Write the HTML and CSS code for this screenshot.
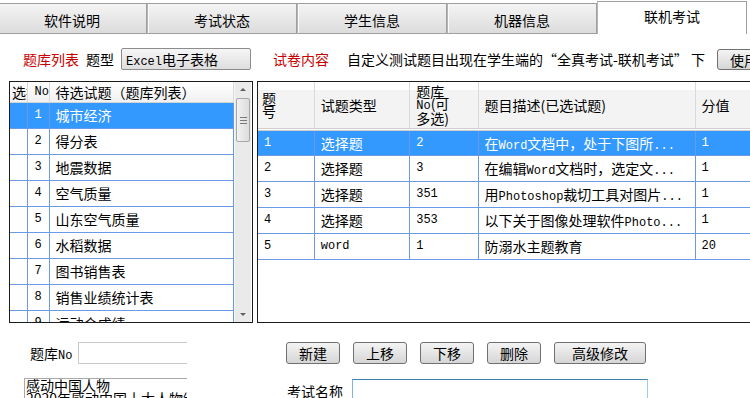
FILE: index.html
```html
<!DOCTYPE html>
<html lang="zh-CN">
<head>
    <meta charset="UTF-8">
    <title>联机考试</title>
    <link rel="stylesheet" href="styles.css">
</head>
<body>
    <div class="tabs">
        <div class="tab">软件说明</div>
        <div class="tab">考试状态</div>
        <div class="tab">学生信息</div>
        <div class="tab">机器信息</div>
        <div class="tab active">联机考试</div>
    </div>

    <div class="toolbar">
        <span class="red">题库列表</span>
        <span class="type-label">题型</span>
        <div class="select"><span class="m">Excel</span>电子表格</div>
        <span class="red paper-label">试卷内容</span>
        <span class="hint">自定义测试题目出现在学生端的“全真考试-联机考试” 下</span>
        <button class="btn use-btn">使用试卷</button>
    </div>

    <div class="panels">
        <div class="panel bank">
            <div class="bank-grid">
                <table class="grid">
                    <colgroup><col style="width:17px"><col style="width:22px"><col></colgroup>
                    <thead>
                        <tr><th class="clip">选择</th><th class="m">No</th><th>待选试题（题库列表）</th></tr>
                    </thead>
                    <tbody>
                        <tr class="sel"><td></td><td class="m num">1</td><td>城市经济</td></tr>
                        <tr><td></td><td class="m num">2</td><td>得分表</td></tr>
                        <tr><td></td><td class="m num">3</td><td>地震数据</td></tr>
                        <tr><td></td><td class="m num">4</td><td>空气质量</td></tr>
                        <tr><td></td><td class="m num">5</td><td>山东空气质量</td></tr>
                        <tr><td></td><td class="m num">6</td><td>水稻数据</td></tr>
                        <tr><td></td><td class="m num">7</td><td>图书销售表</td></tr>
                        <tr><td></td><td class="m num">8</td><td>销售业绩统计表</td></tr>
                        <tr><td></td><td class="m num">9</td><td>运动会成绩</td></tr>
                    </tbody>
                </table>
            </div>
            <div class="scrollbar">
                <div class="arrow up"></div>
                <div class="thumb"><span></span><span></span><span></span></div>
                <div class="track"></div>
                <div class="arrow down"></div>
            </div>
        </div>

        <div class="panel paper">
            <table class="grid paper-grid">
                <colgroup>
                    <col style="width:56px"><col style="width:95px"><col style="width:68px">
                    <col style="width:216px"><col style="width:80px">
                </colgroup>
                <thead>
                    <tr>
                        <th class="stack">题<br>号</th>
                        <th>试题类型</th>
                        <th class="stack">题库<br><span class="m">No</span>(可<br>多选)</th>
                        <th>题目描述(已选试题)</th>
                        <th>分值</th>
                    </tr>
                </thead>
                <tbody>
                    <tr class="sel"><td class="m">1</td><td>选择题</td><td class="m">2</td><td>在<span class="m">Word</span>文档中，处于下图所<span class="m">...</span></td><td class="m">1</td></tr>
                    <tr><td class="m">2</td><td>选择题</td><td class="m">3</td><td>在编辑<span class="m">Word</span>文档时，选定文<span class="m">...</span></td><td class="m">1</td></tr>
                    <tr><td class="m">3</td><td>选择题</td><td class="m">351</td><td>用<span class="m">Photoshop</span>裁切工具对图片<span class="m">...</span></td><td class="m">1</td></tr>
                    <tr><td class="m">4</td><td>选择题</td><td class="m">353</td><td>以下关于图像处理软件<span class="m">Photo...</span></td><td class="m">1</td></tr>
                    <tr><td class="m">5</td><td class="m">word</td><td class="m">1</td><td>防溺水主题教育</td><td class="m">20</td></tr>
                </tbody>
            </table>
        </div>
    </div>

    <div class="bottom">
        <div class="bank-no">
            <span>题库<span class="m">No</span></span>
            <div class="field"></div>
        </div>
        <div class="actions">
            <button class="btn">新建</button>
            <button class="btn">上移</button>
            <button class="btn">下移</button>
            <button class="btn">删除</button>
            <button class="btn wide">高级修改</button>
        </div>
        <div class="memo">感动中国人物<br>2020年感动中国十大人物颁奖词</div>
        <div class="exam-name">
            <span>考试名称</span>
            <div class="field name-field"></div>
        </div>
    </div>
</body>
</html>
```

FILE: styles.css
```css
* {
    margin: 0;
    padding: 0;
    box-sizing: border-box;
}

body {
    width: 750px;
    height: 398px;
    overflow: hidden;
    background: #fff;
    color: #000;
    font-family: "Noto Sans CJK SC", sans-serif;
    font-size: 14px;
}

.m {
    font-family: "Liberation Mono", monospace;
    font-size: 12px;
}

/* tabs */
.tabs {
    display: flex;
    align-items: flex-end;
    height: 34px;
    margin-left: -3px;
    width: 760px;
}

.tab {
    width: 150px;
    height: 31px;
    display: flex;
    align-items: center;
    justify-content: center;
    padding-top: 3px;
    border: 1px solid #9f9f9f;
    border-left-color: #b4b4b4;
    background: linear-gradient(#f4f4f4, #dcdcdc);
    box-shadow: inset 1px 0 #fbfbfb;
}

.tab.active {
    height: 33px;
    padding-top: 0;
    padding-bottom: 5px;
    background: #fff;
    border-bottom: none;
    box-shadow: none;
}

/* toolbar */
.toolbar {
    display: flex;
    align-items: center;
    height: 22px;
    margin-top: 14px;
    padding-left: 23px;
    white-space: nowrap;
}

.toolbar > * {
    flex-shrink: 0;
}

.red {
    color: #c80000;
}

.type-label {
    margin-left: 7px;
}

.select {
    width: 130px;
    height: 22px;
    margin-left: 7px;
    padding-left: 4px;
    line-height: 20px;
    border: 1px solid #8c8c8c;
    border-radius: 2px;
    background: linear-gradient(#f6f6f6, #dedede);
}

.paper-label {
    margin-left: 22px;
}

.hint {
    margin-left: 18px;
}

.btn {
    height: 22px;
    font-family: "Noto Sans CJK SC", sans-serif;
    font-size: 14px;
    color: #000;
    border: 1px solid #707070;
    border-radius: 3px;
    background: linear-gradient(#f4f4f4, #d6d6d6);
}

.use-btn {
    width: 70px;
    height: 21px;
    margin-left: 12px;
    padding-left: 12px;
    text-align: left;
}

/* panels */
.panels {
    display: flex;
    gap: 4px;
    height: 242px;
    margin-top: 11px;
    padding-left: 9px;
}

.panel {
    border: 1px solid #1c1c1c;
    background: #fff;
    overflow: hidden;
}

.bank {
    width: 244px;
    display: flex;
    flex-shrink: 0;
}

.bank-grid {
    width: 224px;
    overflow: hidden;
}

.paper {
    width: 520px;
    flex-shrink: 0;
}

.grid {
    border-collapse: collapse;
    table-layout: fixed;
    width: 100%;
}

.grid th {
    height: 20px;
    padding-left: 6px;
    line-height: 18px;
    font-weight: normal;
    text-align: left;
    white-space: nowrap;
    overflow: hidden;
    background: linear-gradient(#fff, #f0f0f0);
    border-right: 1px solid #dadada;
    border-bottom: 1px solid #d4d4d4;
}

.grid th.clip {
    padding-left: 2px;
}

.grid th.m {
    padding-left: 7px;
}

.grid td {
    height: 26px;
    padding-left: 6px;
    white-space: nowrap;
    overflow: hidden;
    border-right: 1px solid #6a9ae6;
    border-bottom: 1px solid #6a9ae6;
}

.grid td.num {
    padding-left: 0;
    text-align: center;
}

.grid tr.sel td {
    background: #3399ff;
    color: #fff;
}

.paper-grid th {
    height: 47px;
    border-bottom: 3px double #cfcfcf;
    background: linear-gradient(#fff 18%, #f3f3f3 18%);
}

.paper-grid th.stack {
    line-height: 12px;
}

.paper-grid th.stack:first-child {
    line-height: 13px;
    padding-left: 4px;
}

/* scrollbar */
.scrollbar {
    width: 17px;
    display: flex;
    flex-direction: column;
    background: #eaeaea;
    border-left: 1px solid #f4f4f4;
}

.arrow {
    height: 16px;
    position: relative;
}

.arrow::after {
    content: "";
    position: absolute;
    left: 5px;
    border-left: 3px solid transparent;
    border-right: 3px solid transparent;
}

.arrow.up::after {
    top: 6px;
    border-bottom: 3px solid #606060;
}

.arrow.down::after {
    top: 7px;
    border-top: 3px solid #606060;
}

.thumb {
    height: 44px;
    margin: 0 1px;
    border: 1px solid #a8a8a8;
    border-radius: 2px;
    background: linear-gradient(90deg, #f2f2f2, #dcdcdc);
    display: flex;
    flex-direction: column;
    justify-content: center;
    align-items: center;
    gap: 2px;
}

.thumb span {
    width: 7px;
    height: 1px;
    background: #7a7a7a;
}

.track {
    flex: 1;
}

/* bottom */
.bottom {
    display: grid;
    grid-template-columns: 163px auto;
    grid-template-rows: 22px 22px;
    column-gap: 99px;
    row-gap: 14px;
    margin-top: 19px;
    padding-left: 24px;
}

.bank-no {
    display: flex;
    align-items: center;
    overflow: hidden;
    padding-left: 6px;
    white-space: nowrap;
}

.field {
    height: 22px;
    border: 1px solid #c9c9c9;
    background: #fff;
    flex-shrink: 0;
}

.bank-no .field {
    width: 130px;
    margin-left: 6px;
}

.actions {
    display: flex;
    gap: 13px;
}

.actions .btn {
    width: 54px;
}

.actions .btn.wide {
    width: 92px;
}

.memo {
    height: 30px;
    overflow: hidden;
    white-space: nowrap;
    padding-left: 1px;
    line-height: 13px;
    border: 1px solid #a9a9a9;
    border-right: none;
}

.exam-name {
    display: flex;
    align-items: center;
    margin-top: 4px;
    padding-left: 1px;
}

.name-field {
    width: 296px;
    height: 24px;
    margin-left: 9px;
    border-color: #3c7fb1 #9fcaf0 #9fcaf0 #7eb4ea;
}
```
